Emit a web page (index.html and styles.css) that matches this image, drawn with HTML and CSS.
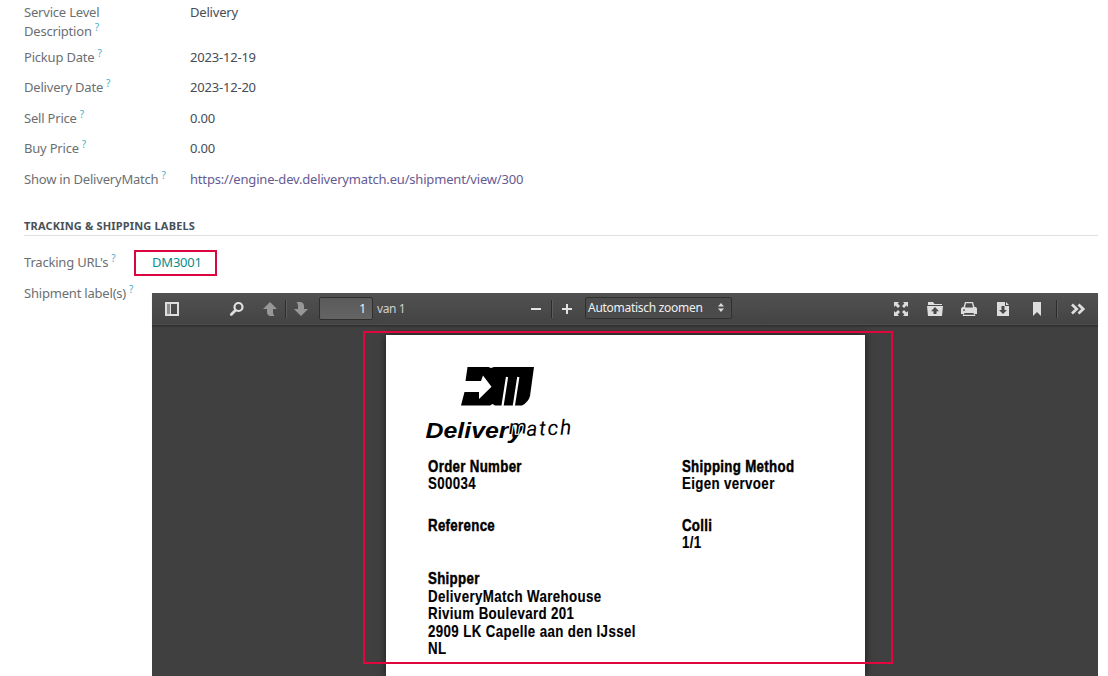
FILE: index.html
```
<!DOCTYPE html>
<html lang="nl">
<head>
<meta charset="utf-8">
<title>Shipment</title>
<link rel="stylesheet" href="styles.css">
</head>
<body>
<main class="form">
  <section class="details">
    <div class="row row-tall"><div class="label">Service Level<br>Description<sup>?</sup></div><div class="value">Delivery</div></div>
    <div class="row"><div class="label">Pickup Date<sup>?</sup></div><div class="value">2023-12-19</div></div>
    <div class="row"><div class="label">Delivery Date<sup>?</sup></div><div class="value">2023-12-20</div></div>
    <div class="row"><div class="label">Sell Price<sup>?</sup></div><div class="value">0.00</div></div>
    <div class="row"><div class="label">Buy Price<sup>?</sup></div><div class="value">0.00</div></div>
    <div class="row"><div class="label">Show in DeliveryMatch<sup>?</sup></div><div class="value"><a class="url">https://engine-dev.deliverymatch.eu/shipment/view/300</a></div></div>
  </section>

  <h2 class="section-title">TRACKING &amp; SHIPPING LABELS</h2>

  <section class="tracking">
    <div class="label">Tracking URL's<sup>?</sup></div>
    <div class="tracking-link"><a>DM3001</a></div>
  </section>

  <section class="shipment">
    <div class="label">Shipment label(s)<sup>?</sup></div>
    <div class="viewer">
      <div class="toolbar">
        <div class="group group-left">
          <span class="btn"><svg width="16" height="16" viewBox="0 0 16 16"><path fill="#ddd" fill-rule="evenodd" d="M1 1h14v14H1zM3 3v10h3V3zM7 3v10h6V3z"/><path fill="#8c8c8c" d="M3 3h3v10H3z"/></svg></span>
          <span class="btn btn-search"><svg width="16" height="16" viewBox="0 0 16 16"><circle cx="9.500" cy="6" r="4" fill="none" stroke="#e2e2e2" stroke-width="2.200"/><path d="M6.500 9.200L2.300 13.400" stroke="#ddd" stroke-width="2.800" stroke-linecap="round"/></svg></span>
          <span class="btn btn-up"><svg width="16" height="16" viewBox="0 0 16 16"><path fill="#979797" d="M8 1l7 7h-4v3.500q.3 2 1.500 3.500H8q-3-1-3-4V8H1z"/></svg></span>
          <span class="sep"></span>
          <span class="btn btn-down"><svg width="16" height="16" viewBox="0 0 16 16"><path fill="#979797" d="M8 15l7-7h-4V5q0-3-3-4H3.500Q5 2.500 5 4.500V8H1z"/></svg></span>
          <span class="page-input">1</span>
          <span class="page-count">van 1</span>
        </div>
        <div class="group group-center">
          <span class="btn btn-minus"><svg width="16" height="16" viewBox="0 0 16 16"><path fill="#e2e2e2" d="M3 7h10v2H3z"/></svg></span>
          <span class="sep"></span>
          <span class="btn btn-plus"><svg width="16" height="16" viewBox="0 0 16 16"><path fill="#e2e2e2" d="M3 7h4V3h2v4h4v2H9v4H7V9H3z"/></svg></span>
          <span class="zoom-select">Automatisch zoomen<svg width="6" height="9" viewBox="0 0 6 9"><path fill="#ddd" d="M3 0l3 3.500H0zM3 9L0 5.500h6z"/></svg></span>
        </div>
        <div class="group group-right">
          <span class="btn-wide"><svg width="16" height="16" viewBox="0 0 16 16"><g fill="#ddd"><path d="M1 1h5L4.600 2.500 7 5 5 7 2.500 4.600 1 6z"/><path d="M15 1v5l-1.500-1.400L11 7 9 5l2.400-2.500L10 1z"/><path d="M1 15v-5l1.500 1.400L5 9l2 2-2.400 2.500L6 15z"/><path d="M15 15h-5l1.400-1.500L9 11l2-2 2.500 2.400L15 10z"/></g></svg></span>
          <span class="btn-wide"><svg width="16" height="16" viewBox="0 0 16 16"><path fill="#ddd" fill-rule="evenodd" d="M1 1h5l1.500 2H15v1H1zM0 5h16l-1 10H1zM8 6L4 10.200h2.500V13h3v-2.800H12z"/></svg></span>
          <span class="btn-wide"><svg width="16" height="16" viewBox="0 0 16 16"><path fill="#ddd" fill-rule="evenodd" d="M4 1h8l1.500 5H15l1 1.500V13h-2.500l1 2h-13l1-2H0V7.500L1.500 6h1zM5 2.300L4 6.500h8L11 2.300zM2 8.500v1.200h2V8.500zM3.500 12l-.7 1.700h10.400l-.7-1.700z"/></svg></span>
          <span class="btn-wide"><svg width="16" height="16" viewBox="0 0 16 16"><path fill="#ddd" fill-rule="evenodd" d="M2 1h8v4h4v10H2zM6.500 5v4H4l4 4 4-4H9.500V5z"/><path fill="#ddd" d="M11 1l3 3h-3z"/></svg></span>
          <span class="btn-wide"><svg width="16" height="16" viewBox="0 0 16 16"><path fill="#ddd" d="M4 1h8v14l-4-4-4 4z"/></svg></span>
          <span class="sep"></span>
          <span class="btn btn-more"><svg width="16" height="16" viewBox="0 0 16 16"><path fill="none" stroke="#ddd" stroke-width="2.700" d="M2 3.500L6.700 8 2 12.500M8.500 3.500L13.200 8l-4.700 4.500"/></svg></span>
        </div>
      </div>
      <div class="canvas">
        <article class="page">
          <svg class="logo" width="150" height="84" viewBox="422 362 150 84">
            <path d="M467.500 367H488.500L491 368L494 367H534L530 396Q528.500 402 522 405.500H495L492.500 404L490 405.500H461L464.500 392H479V399L491.500 386.700L483 375.500L481 381H465.500z"/>
            <path fill="none" stroke="#fff" stroke-width="2.200" d="M507 377L502.500 406M518.300 377L513.800 406"/>
            <text class="logo-bold" x="425.500" y="438" textLength="83" lengthAdjust="spacingAndGlyphs">Deliver</text>
            <text class="logo-bold" x="508.500" y="438" textLength="15" lengthAdjust="spacingAndGlyphs">y</text>
            <g transform="rotate(-2 526 436)">
              <text class="logo-m" x="509" y="433.500" textLength="18" lengthAdjust="spacingAndGlyphs">m</text>
              <text class="logo-thin" x="526.500" y="436" textLength="45" lengthAdjust="spacing">atch</text>
            </g>
          </svg>
          <div class="fields">
            <div class="field"><b>Order Number</b><span>S00034</span></div>
            <div class="field"><b>Shipping Method</b><span>Eigen vervoer</span></div>
            <div class="field"><b>Reference</b></div>
            <div class="field"><b>Colli</b><span>1/1</span></div>
            <div class="field"><b>Shipper</b><span>DeliveryMatch Warehouse</span><span>Rivium Boulevard 201</span><span>2909 LK Capelle aan den IJssel</span><span>NL</span></div>
          </div>
        </article>
        <div class="highlight"></div>
      </div>
    </div>
  </section>
</main>
</body>
</html>
```
FILE: styles.css
```
* { box-sizing: border-box; }
body {
  margin: 0;
  height: 676px;
  overflow: hidden;
  background: #fff;
  color: #495057;
  font: 13px/19px "Noto Sans", sans-serif;
  letter-spacing: -0.2px;
}
.form { display: flex; flex-direction: column; height: 676px; padding: 3px 10px 0 24px; }
.row { display: flex; align-items: center; height: 30.5px; }
.row-tall { align-items: flex-start; height: 39px; }
.row .label { width: 166px; flex: none; white-space: nowrap; }
.label { color: #6b6f73; }
.value { color: #464c54; }
.url { color: #665b92; letter-spacing: -0.18px; }
sup {
  margin-left: 3px;
  color: #45b0c8;
  font-size: 10px;
  line-height: 0;
  vertical-align: 5px;
}
.section-title {
  margin: 21px 0 0;
  height: 20px;
  border-bottom: 1px solid #dee2e6;
  color: #495057;
  font-size: 11px;
  font-weight: 700;
  line-height: 20px;
  letter-spacing: 0.18px;
}
.tracking { display: flex; align-items: center; margin-top: 14px; height: 26px; }
.tracking .label { width: 110px; }
.tracking-link {
  width: 83px;
  height: 26px;
  padding-left: 16px;
  border: 2px solid #d9063f;
  color: #0a8c8a;
  line-height: 21px;
}
.shipment { display: flex; flex: 1; min-height: 0; margin-top: 8px; }
.shipment .label { width: 128px; flex: none; white-space: nowrap; }
.viewer { display: flex; flex: 1; flex-direction: column; margin-top: 9px; background: #404040; }

.toolbar {
  display: flex;
  justify-content: space-between;
  height: 33px;
  flex: none;
  padding: 0 4px;
  background: linear-gradient(#515151, #434343);
  border-bottom: 1px solid #303030;
  box-shadow: inset 0 -1px 0 #4d4d4d, 0 1px 1px rgba(0, 0, 0, 0.15);
  color: #dcdcdc;
  font-size: 12px;
}
.group { display: flex; align-items: center; height: 32px; }
.btn, .btn-wide { display: flex; justify-content: center; width: 32px; flex: none; }
.btn-wide { width: 34px; }
.btn-search { margin-left: 33px; }
.btn-up { width: 31px; margin-left: 1px; }
.btn-down { width: 28px; }
.btn-minus { width: 31px; }
.btn-plus { width: 28px; }
.btn-more { margin-left: 4px; }
.group-left { width: 300px; margin-right: 64px; }
.group-center { width: 212px; margin-right: auto; }
.sep { width: 2px; height: 18px; flex: none; border-left: 1px solid #2c2c2c; border-right: 1px solid #5c5c5c; }
.group-right .sep { margin-left: 2px; }
.page-input {
  width: 54px;
  height: 23px;
  margin: -1px 0 0 4px;
  padding-right: 6px;
  border: 1px solid #2f2f2f;
  border-radius: 2px;
  background: linear-gradient(#5a5a5a, #646464);
  color: #f2f2f2;
  line-height: 21px;
  text-align: right;
}
.page-count { margin-left: 4px; color: #d0d0d0; letter-spacing: -0.4px; white-space: nowrap; }
.zoom-select {
  display: flex;
  align-items: center;
  justify-content: space-between;
  width: 147px;
  height: 22px;
  flex: none;
  margin: -2px 0 0 4px;
  padding: 0 7px 0 2px;
  border: 1px solid #303030;
  border-radius: 2px;
  background: #4b4b4b;
  color: #f0f0f0;
  letter-spacing: -0.28px;
  white-space: nowrap;
}

.canvas { position: relative; flex: 1; min-height: 0; padding: 9px 0 0 234px; overflow: hidden; }
.page {
  width: 479px;
  height: 100%;
  padding: 27px 0 0 36px;
  background: #fff;
  box-shadow: 0 0 8px rgba(0, 0, 0, 0.6);
  color: #000;
}
.logo { display: block; }
.logo-bold { font: italic 700 22px "Liberation Sans", sans-serif; letter-spacing: 0; }
.logo-thin { font: italic 400 21px Roboto, sans-serif; letter-spacing: 0; }
.logo-m { font: italic 400 20px Roboto, sans-serif; stroke: #fff; stroke-width: 2px; paint-order: stroke; letter-spacing: 0; }
.fields {
  display: grid;
  grid-template-columns: 315px 260px;
  grid-template-rows: 59px 53.5px auto;
  width: 575px;
  margin: 12px 0 0 5.5px;
  transform: scaleX(0.806);
  transform-origin: 0 0;
  font: 700 16.5px/17.5px "Liberation Sans", sans-serif;
  letter-spacing: 0.46px;
  -webkit-text-stroke: 0.15px #000;
}
.field { display: flex; flex-direction: column; white-space: nowrap; }
.field b { letter-spacing: 0.38px; -webkit-text-stroke: 0.45px #000; }
.highlight { position: absolute; left: 211px; top: 5px; width: 530px; height: 333px; border: 2px solid #e2063f; }
```
